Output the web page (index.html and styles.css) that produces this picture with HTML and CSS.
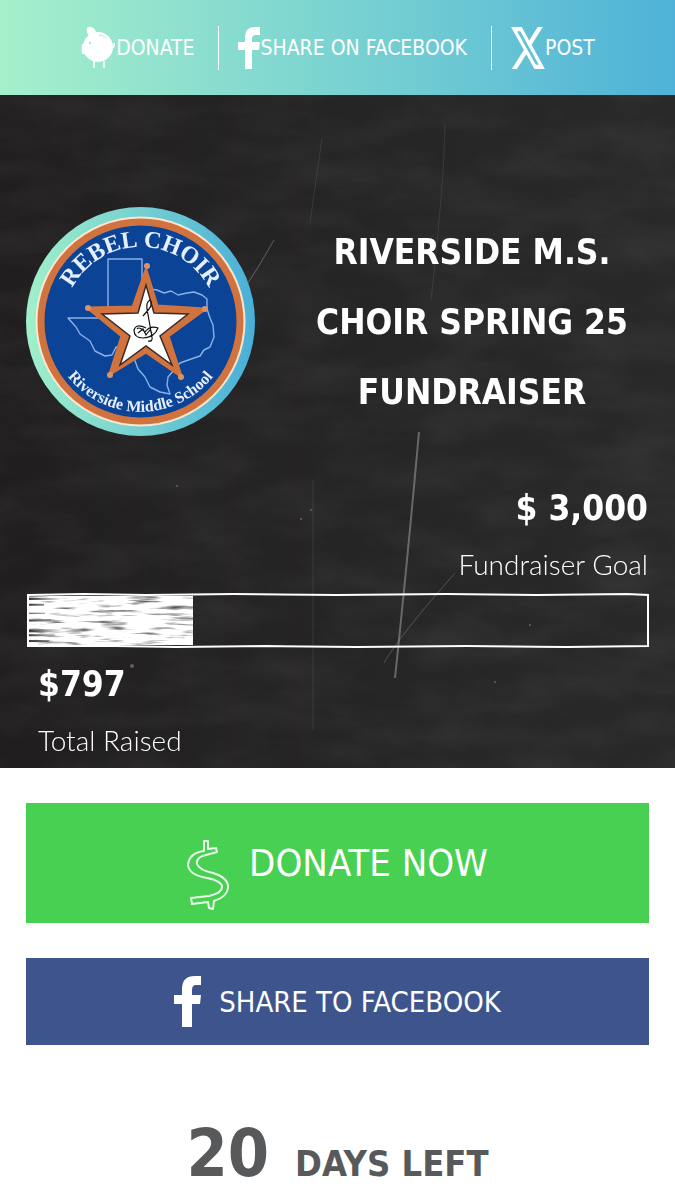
FILE: index.html
```html
<!DOCTYPE html>
<html lang="en">
<head>
<meta charset="utf-8">
<meta name="viewport" content="width=device-width, initial-scale=1">
<title>Riverside M.S. Choir Spring 25 Fundraiser</title>
<link rel="stylesheet" href="styles.css">
</head>
<body>
<header class="topbar">
  <nav class="topnav" aria-label="Share">
    <a class="toplink" href="#donate">
      <svg class="pig" viewBox="0 0 36 44" aria-hidden="true">
        <g fill="#fff"><circle cx="18" cy="21" r="15"/><path d="M2 18h7v10H2q-1-5 0-10zM9 10Q6 6 7 2q1-2 4-1 4 1 5 5z"/></g>
        <path d="M14 35v7M24 35v7M32 22q3-1 2-5" fill="none" stroke="#fff" stroke-width="1.500"/>
        <path d="M19 9q4 0 7 3" fill="none" stroke="#b5eadf" stroke-width="1"/>
        <ellipse cx="10" cy="17" rx="1" ry="1.500" fill="#a5e6d8"/>
      </svg><span>DONATE</span>
    </a>
    <a class="toplink" href="#share">
      <svg class="fb" viewBox="0 0 22 42" aria-hidden="true"><path fill="#fff" d="M7 42V23H0v-8h7V11Q7 0 17 0h5v8h-4q-4 0-4 4v3h8l-1 8h-7v19z"/></svg><span>SHARE ON FACEBOOK</span>
    </a>
    <a class="toplink" href="#post">
      <svg class="x" viewBox="1.200 2.200 21.700 19.600" preserveAspectRatio="none" aria-hidden="true"><path fill="#fff" d="M18.244 2.250h3.308l-7.227 8.260 8.502 11.240H16.170l-5.214-6.817L4.990 21.750H1.680l7.730-8.835L1.254 2.250H8.080l4.713 6.231zm-1.161 17.520h1.833L7.084 4.126H5.117z"/></svg><span>POST</span>
    </a>
  </nav>
</header>

<main>
<section class="hero">
  <svg class="board" viewBox="0 0 675 673" preserveAspectRatio="none" aria-hidden="true">
    <defs>
      <filter id="dust" x="0" y="0" width="100%" height="100%"><feTurbulence type="fractalNoise" baseFrequency=".012 .03" numOctaves="6" seed="8"/><feColorMatrix values="0 0 0 0 1  0 0 0 0 1  0 0 0 0 1  .3 0 0 0 -.1"/></filter>
      <filter id="soft" x="-20%" y="-20%" width="140%" height="140%"><feGaussianBlur stdDeviation=".6"/></filter>
      <linearGradient id="shade"><stop stop-color="#201e1e"/><stop offset=".6" stop-color="#272626"/><stop offset="1" stop-color="#29292a"/></linearGradient>
    </defs>
    <rect width="675" height="673" fill="url(#shade)"/>
    <rect width="675" height="673" filter="url(#dust)" opacity=".3"/>
    <g fill="none" stroke="#aaa" filter="url(#soft)">
      <path d="M419 337Q407 470 395 583" stroke-width="2" opacity=".5"/>
      <path d="M384 568Q400 540 455 478" opacity=".35"/>
      <path d="M274 145Q258 174 240 200" opacity=".45"/>
      <path d="M445 28Q444 90 431 205M322 43l-12 85M313 385v250" opacity=".15"/>
    </g>
    <g fill="#bbb" opacity=".4"><circle cx="132" cy="571" r="2"/><circle cx="301" cy="424" r="1"/><circle cx="311" cy="415" r="1"/><circle cx="177" cy="391" r="1"/><circle cx="530" cy="530" r="1"/><circle cx="495" cy="587" r="1"/></g>
  </svg>

  <div class="intro">
    <svg class="crest" viewBox="0 0 229 229" role="img" aria-label="Rebel Choir, Riverside Middle School">
      <defs>
        <linearGradient id="ring"><stop stop-color="#a0f0ca"/><stop offset="1" stop-color="#49afd8"/></linearGradient>
        <path id="arc-top" d="M42 91A77 77 0 0 1 187 91"/>
        <path id="arc-bottom" d="M25 137A93 93 0 0 0 204 137"/>
      </defs>
      <circle cx="114.500" cy="114.500" r="114.500" fill="url(#ring)"/>
      <circle cx="114.500" cy="114.500" r="105" fill="#fbe6d2"/>
      <circle cx="114.500" cy="114.500" r="99.500" fill="#0b4497" stroke="#d1733e" stroke-width="7"/>
      <path fill="none" stroke="#8ab2e6" stroke-width="1.400" stroke-linejoin="round" d="M82 111V52H116V80L124 82 131 83 138 86 145 84 152 88 161 86 168 85 176 88 181 92V102L184 111 187 118 188 130 184 140 178 143 174 149 168 151 154 156 148 163 142 170 141 178 144 187 134 185 124 180 119 170 112 162 108 151 98 142 90 140 86 148 79 149 69 144 64 134 54 127 50 120 42 111Z"/>
      <path d="M120 63 131 99 179 102 142 129 155 169 120 145 84 167 96 129 62 101 107 100Z" fill="#d1733e" stroke="#d1733e" stroke-width="3" stroke-linejoin="round"/>
      <path d="M120 78 128 106 162 107 134 129 146 158 120 139 94 158 104 129 76 107 112 106Z" fill="#fff" stroke="#3b2a26" stroke-width="1.500"/>
      <g fill="#dc9268"><circle cx="121" cy="59" r="3"/><circle cx="62" cy="101" r="3"/><circle cx="179" cy="102" r="3"/><circle cx="84" cy="168" r="3"/><circle cx="155" cy="170" r="3"/></g>
      <path d="M122 134q5 1 4-4l-5-28q-1-7 3-9 3 4-1 9l-6 7M120 121q-10-5-12 2 0 8 9 8 12-1 15-10-8-3-13 4-6-6-8-3M112 126l5-4 3 6 4-5 2 3" fill="none" stroke="#111" stroke-width="1.200"/>
      <text class="crest-top"><textPath href="#arc-top" startOffset="50%" text-anchor="middle">REBEL CHOIR</textPath></text>
      <text class="crest-bottom"><textPath href="#arc-bottom" startOffset="50%" text-anchor="middle">Riverside Middle School</textPath></text>
    </svg>
    <h1 class="title">RIVERSIDE M.S. CHOIR SPRING 25 FUNDRAISER</h1>
  </div>

  <div class="goal">
    <strong class="amount">$ 3,000</strong>
    <span class="label">Fundraiser Goal</span>
  </div>
  <div class="meter" role="progressbar" aria-label="Total raised" aria-valuemin="0" aria-valuemax="3000" aria-valuenow="797">
    <div class="fill" style="width:26.6%">
      <svg class="strokes" viewBox="0 0 163 50" preserveAspectRatio="none" aria-hidden="true">
        <defs><filter id="brush" x="0" y="0" width="100%" height="100%"><feTurbulence type="fractalNoise" baseFrequency=".03 .28" numOctaves="3" seed="4"/><feColorMatrix values="0 0 0 0 .1  0 0 0 0 .1  0 0 0 0 .1  3 0 0 0 -1.600"/></filter>
        <linearGradient id="edge"><stop stop-color="#222" stop-opacity=".9"/><stop offset="1" stop-color="#222" stop-opacity="0"/></linearGradient></defs>
        <rect width="163" height="50" filter="url(#brush)"/>
        <path fill="url(#edge)" d="M0 2h30v2H0zM0 8h15v2H0zM0 17h16v1H0zM0 24h22v2H0zM0 34h34v3H0zM0 39h26v2H0zM0 45h20v2H0z"/>
      </svg>
    </div>
    <svg class="frame" viewBox="0 0 622 55" preserveAspectRatio="none" aria-hidden="true"><path fill="none" stroke="#fff" stroke-width="2" d="M2 2 58 1 120 2 208 1 310 2 420 1 510 2 600 1 621 2V53L540 54 440 53 330 54 240 53 150 54 90 53 2 53Z"/></svg>
  </div>
  <div class="raised">
    <strong class="amount">$797</strong>
    <span class="label">Total Raised</span>
  </div>
</section>

<section class="actions">
  <button class="btn donate" type="button">
    <svg class="dollar" viewBox="0 0 42 70" aria-hidden="true"><path fill="none" stroke="#e9ffe9" stroke-width="2" stroke-linejoin="round" d="M17 1h4v8l8-1 1 4-11 3Q9 17 10 24q2 6 16 9 16 5 15 15-1 9-14 13l-1 8-4-1-1-6-16 2-1-6 18-2q13-3 13-9 0-6-15-9Q2 35 1 25 2 13 17 11z"/></svg>
    <span>DONATE NOW</span>
  </button>
  <button class="btn facebook" type="button">
    <svg class="fb-large" viewBox="0 0 28 51" aria-hidden="true"><path fill="#fff" d="M8 51V28H0v-9h8v-6Q8 0 21 0h6v9h-5q-4 0-4 5v5h9l-1 9h-8v23z"/></svg>
    <span>SHARE TO FACEBOOK</span>
  </button>
  <p class="days"><strong class="count">20</strong> <span>DAYS LEFT</span></p>
</section>
</main>
</body>
</html>
```
FILE: styles.css
```css
* {
  box-sizing: border-box;
}

body {
  margin: 0;
  background: #fff;
  color: #fff;
  font-family: "DejaVu Sans Condensed", "Open Sans", sans-serif;
}

.topbar {
  background: linear-gradient(90deg, #a6f0cb, #7ad3d1 50%, #4fb2d8);
}

.topnav {
  display: flex;
  justify-content: center;
  align-items: center;
  padding: 26px 0 25px;
}

.toplink {
  display: flex;
  align-items: center;
  height: 44px;
  padding: 0 24px 0 19px;
  color: #fff;
  font-size: 21px;
  text-decoration: none;
  white-space: nowrap;
}

.toplink:first-child {
  padding-left: 0;
}

.toplink:last-child {
  padding-right: 0;
}

.toplink + .toplink {
  border-left: 1px solid #fff;
}

.pig {
  width: 36px;
  height: 44px;
}

.fb {
  width: 22px;
  height: 42px;
}

.x {
  width: 34px;
  height: 42px;
}

.hero {
  position: relative;
  padding: 112px 26px 0;
  background: #252424;
}

.board {
  position: absolute;
  inset: 0;
  width: 100%;
  height: 100%;
}

.intro,
.goal,
.raised,
.meter {
  position: relative;
}

.intro {
  display: flex;
  align-items: center;
  gap: 40px;
}

.crest {
  flex: none;
  width: 229px;
  height: 229px;
}

.crest-top,
.crest-bottom {
  fill: #e6efff;
  font-family: "Liberation Serif", serif;
  font-weight: bold;
}

.crest-top {
  font-size: 24px;
}

.crest-bottom {
  font-size: 16px;
}

.title {
  flex: 1;
  margin: 0;
  font-size: 35px;
  font-weight: bold;
  line-height: 70px;
  text-align: center;
}

.goal,
.raised {
  display: flex;
  flex-direction: column;
}

.goal {
  align-items: flex-end;
  padding: 44px 1px 1px 0;
}

.raised {
  padding: 8px 12px 0;
}

.amount {
  font-size: 35px;
  line-height: 56px;
}

.label {
  font-family: Lato, sans-serif;
  font-size: 28px;
  font-weight: 300;
  line-height: 56px;
}

.meter {
  height: 55px;
  padding: 3px;
}

.fill {
  height: 100%;
  background: #fff;
}

.strokes {
  display: block;
  width: 100%;
  height: 100%;
}

.frame {
  position: absolute;
  inset: 0;
  width: 100%;
  height: 100%;
}

.actions {
  display: flex;
  flex-direction: column;
  gap: 35px;
  padding: 35px 26px 0;
}

.btn {
  display: flex;
  justify-content: center;
  align-items: center;
  border: 0;
  color: #fff;
  font-family: inherit;
  cursor: pointer;
}

.donate {
  gap: 20px;
  min-height: 120px;
  background: #48d052;
  font-size: 38px;
}

.dollar {
  width: 42px;
  height: 70px;
  margin-top: 24px;
}

.facebook {
  gap: 17px;
  min-height: 87px;
  background: #3e548c;
  font-size: 29px;
}

.fb-large {
  width: 28px;
  height: 51px;
}

.days {
  display: flex;
  justify-content: center;
  align-items: baseline;
  gap: 26px;
  margin: 0;
  padding-top: 36px;
  color: #58595b;
  font-size: 36px;
  font-weight: bold;
  line-height: 76px;
}

.count {
  font-size: 66px;
}
```
